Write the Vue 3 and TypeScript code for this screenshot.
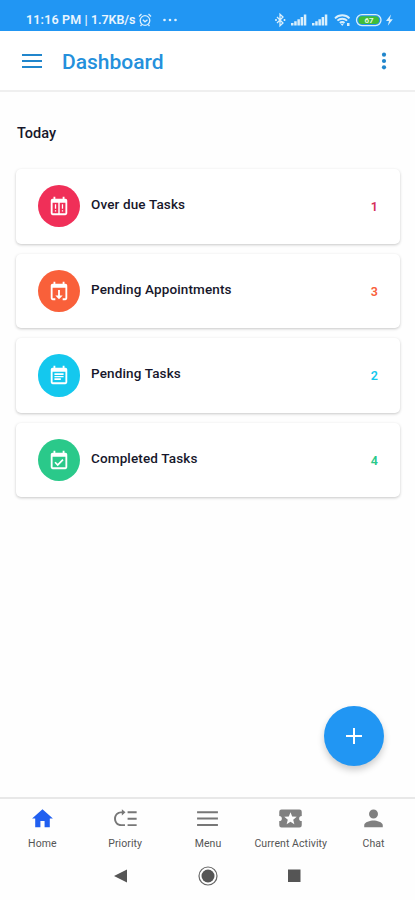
<script setup lang="ts">
interface TaskCard {
  label: string
  count: number
  tone: string
  glyph: string
}

interface Tab {
  label: string
  tone: string
  path: string
}

const frame =
  'M19 4h-1V2h-2v2H8V2H6v2H5a2 2 0 0 0-2 2v14a2 2 0 0 0 2 2h14a2 2 0 0 0 2-2V6a2 2 0 0 0-2-2zm0 16H5V8.500h14z'

const cards: TaskCard[] = [
  { label: 'Over due Tasks', count: 1, tone: 'red', glyph: frame + 'M11.200 8.500h1.600v11.500h-1.600zM7.500 10h1.400v5H7.500zm0 6.500h1.400V18H7.500zM15.100 10h1.400v5h-1.400zm0 6.500h1.400V18h-1.400z' },
  {
    label: 'Pending Appointments',
    count: 3,
    tone: 'orange',
    glyph:
      'M19 4h-1V2h-2v2H8V2H6v2H5a2 2 0 0 0-2 2v14a2 2 0 0 0 2 2h3v-2H5V8.500h14V20h-3v2h3a2 2 0 0 0 2-2V6a2 2 0 0 0-2-2zM11 11v6H8l4 4 4-4h-3v-6z',
  },
  { label: 'Pending Tasks', count: 2, tone: 'cyan', glyph: frame + 'M7 10h10v2H7zm0 3h10v1.500H7zm0 2.500h7v2H7z' },
  { label: 'Completed Tasks', count: 4, tone: 'green', glyph: frame + 'M10.600 18.700l6.400-6.400-1.300-1.300-5.100 5.100-2.300-2.300L7 15.100z' },
]

const tabs: Tab[] = [
  { label: 'Home', tone: 'active', path: 'M10 20.500v-6h4v6h5v-8.500h3L12 3 2 12h3v8.500z' },
  {
    label: 'Priority',
    tone: 'mid',
    path: 'M14 17.400h8.700v1.900H14zm0-6.200h8.700v1.900H14zM14 5h8.700v1.900H14zM1 12.200C1 8.300 4 5.200 7.800 5.200H8.500V3.200l3.500 2.900-3.500 2.900V7H7.800C4.900 7 2.900 9.200 2.900 12.200s2 5.200 4.900 5.200H11.500v1.900H7.800C4 19.300 1 16.100 1 12.200z',
  },
  { label: 'Menu', tone: 'mid', path: 'M2 5h20v1.900H2zm0 6.100h20V13H2zm0 6.100h20v1.900H2z' },
  {
    label: 'Current Activity',
    tone: 'soft',
    path: 'M22.800 9.500V5.500a2.200 2.200 0 0 0-2.200-2.200H3.400a2.200 2.200 0 0 0-2.200 2.200v4a2.500 2.500 0 0 1 0 5v4a2.200 2.200 0 0 0 2.200 2.200h17.200a2.200 2.200 0 0 0 2.200-2.200v-4a2.500 2.500 0 0 1 0-5zM15.700 17.400L12 15l-3.700 2.400 1.100-4.300L6 10.300l4.400-.3L12 5.900l1.600 4.100 4.400.3-3.400 2.800z',
  },
  {
    label: 'Chat',
    tone: 'soft',
    path: 'M12 12a4.300 4.300 0 1 0 0-8.600 4.300 4.300 0 0 0 0 8.600zm0 2c-3 0-8.900 1.500-8.900 4.500v2h17.800v-2c0-3-5.900-4.500-8.900-4.500z',
  },
]
</script>

<template>
  <div class="screen">
    <div class="status">
      <span class="clock">11:16 PM | <span class="speed">1.7KB/s</span></span>
      <svg class="alarm" viewBox="0 0 14 14">
        <circle cx="7" cy="7.500" r="4.800" />
        <path d="M1 3.500L3.500 1M13 3.500L10.500 1M4.800 6.700L7 8.800l2.500-2M3.700 11.500l-1.200 1.500M10.300 11.500l1.200 1.500" />
      </svg>
      <svg class="dots" viewBox="0 0 14 4">
        <circle cx="1.500" cy="2" r="1.300" /><circle cx="7" cy="2" r="1.300" /><circle cx="12.500" cy="2" r="1.300" />
      </svg>
      <svg class="signals" viewBox="0 0 124 16">
        <path class="line" d="M2 5l6 6-3 2.800V2.200L8 5l-6 6" />
        <path class="dot" d="M.2 7h1.600v2H.2zM8.700 7h1.600v2H8.700z" />
        <g v-for="x in [16, 37]" :key="x" class="bars">
          <path :d="`M${x} 11h2.500v2.500H${x}zM${x + 3.200} 9.200h2.500v4.300h-2.500zM${x + 6.400} 7.200h2.500v6.300h-2.500zM${x + 9.600} 5h2.500v8.500h-2.500zM${x + 12.800} 2.500h2.500v11h-2.500z`" />
        </g>
        <path class="wifi" d="M60 6.300c4-4 10.500-4 14.500 0M62.400 8.700c2.700-2.700 7-2.700 9.700 0M64.900 11c1.300-1.300 3.300-1.300 4.600 0" />
        <path class="dot" d="M65.600 11.800h3.300L67.200 14zM72 11h2.500v3H72z" />
        <rect class="shell" x="81.500" y="2.600" width="24.500" height="11" rx="5.500" />
        <rect class="charge" x="83.500" y="4.300" width="20.500" height="7.600" rx="3.500" />
        <text class="level" x="94" y="11" text-anchor="middle">67</text>
        <path class="dot" d="M116 2.500l-5 6.500h3l-1.200 4.800 5-6.500h-3z" />
      </svg>
    </div>

    <header class="bar">
      <svg class="burger" viewBox="0 0 20 14"><path d="M0 1h20M0 7h20M0 13h20" /></svg>
      <h1>Dashboard</h1>
      <svg class="more" viewBox="0 0 6 18">
        <circle cx="3" cy="2.700" r="2.100" /><circle cx="3" cy="9" r="2.100" /><circle cx="3" cy="15.300" r="2.100" />
      </svg>
    </header>

    <main>
      <h2>Today</h2>
      <ul class="cards">
        <li v-for="card in cards" :key="card.label" class="card" :class="card.tone">
          <span class="badge"><svg viewBox="0 0 24 24"><path :d="card.glyph" /></svg></span>
          <span class="label">{{ card.label }}</span>
          <span class="count">{{ card.count }}</span>
        </li>
      </ul>
      <button class="fab" aria-label="Add">
        <svg viewBox="0 0 18 18"><path d="M9 1v16M1 9h16" /></svg>
      </button>
    </main>

    <nav class="tabs">
      <div v-for="tab in tabs" :key="tab.label" class="tab" :class="tab.tone">
        <svg viewBox="0 0 24 24"><path :d="tab.path" /></svg>
        <span>{{ tab.label }}</span>
      </div>
    </nav>

    <footer class="system">
      <svg viewBox="0 0 20 20"><path d="M3 10L16 3.500v13z" /></svg>
      <svg viewBox="0 0 20 20"><circle class="ring" cx="10" cy="10" r="9" /><circle cx="10" cy="10" r="6.500" /></svg>
      <svg viewBox="0 0 20 20"><path d="M4 3.500h12.500v12.500H4z" /></svg>
    </footer>
  </div>
</template>

<style>
body {
  margin: 0;
  background: #fefefe;
}
</style>

<style scoped>
.screen {
  box-sizing: border-box;
  display: flex;
  flex-direction: column;
  width: 415px;
  height: 900px;
  overflow: hidden;
  background: #fefefe;
  color: #17172b;
  font-family: Roboto, 'Liberation Sans', sans-serif;
}
svg {
  display: block;
  flex: none;
}
.status {
  display: flex;
  align-items: center;
  flex: none;
  box-sizing: border-box;
  height: 31px;
  padding: 9px 20px 0 26px;
  background: #2196f3;
  color: #e9f5fe;
}
.clock {
  width: 111px;
  font-size: 12.500px;
  font-weight: 600;
  line-height: 16px;
  letter-spacing: 0.15px;
  white-space: nowrap;
}
.speed {
  letter-spacing: -0.1px;
}
.alarm {
  width: 14px;
  height: 14px;
  margin-left: 1px;
  fill: none;
  stroke: #d9eefd;
  stroke-width: 1.3;
}
.dots {
  width: 14px;
  height: 4px;
  margin-left: 11px;
  fill: #e3f3fe;
}
.signals {
  width: 124px;
  height: 16px;
  margin-left: auto;
  margin-right: -4px;
}
.line,
.wifi,
.shell {
  fill: none;
  stroke: #d9effc;
  stroke-width: 1.3;
}
.wifi {
  stroke-width: 1.9;
}
.bars,
.dot {
  fill: #d9effc;
}
.charge {
  fill: #3fbd38;
}
.level {
  fill: #e5fae0;
  font-size: 8px;
  font-weight: 700;
}
.bar {
  display: flex;
  align-items: center;
  flex: none;
  box-sizing: border-box;
  height: 61px;
  padding: 0 28px 0 22px;
  border-bottom: 2px solid #efefef;
  background: #fff;
}
.burger {
  width: 20px;
  height: 14px;
  stroke: #2186cc;
  stroke-width: 2;
}
.bar h1 {
  flex: 1;
  margin: 2px 0 0 20px;
  color: #2490dc;
  font-size: 21px;
  font-weight: 500;
  line-height: 28px;
}
.more {
  width: 6px;
  height: 18px;
  fill: #2186cc;
}
main {
  position: relative;
  flex: 1;
  padding: 32px 15px 0 16px;
}
h2 {
  margin: 0 0 0 1px;
  font-size: 14.5px;
  font-weight: 500;
  line-height: 20px;
}
.cards {
  display: flex;
  flex-direction: column;
  gap: 10px;
  margin: 25px 0 0;
  padding: 0;
  list-style: none;
}
.card {
  display: flex;
  align-items: center;
  box-sizing: border-box;
  height: 74.600px;
  padding: 0 22px 0 21.600px;
  border-radius: 5px;
  background: #fff;
  box-shadow: 0 1px 3px rgba(0, 0, 0, 0.22);
}
.badge {
  display: flex;
  align-items: center;
  justify-content: center;
  flex: none;
  width: 42.400px;
  height: 42.400px;
  border-radius: 50%;
  background: currentColor;
}
.badge svg {
  width: 22px;
  height: 22px;
  fill: #fff;
}
.label {
  flex: 1;
  margin: -4px 0 0 11px;
  color: #17172b;
  font-size: 13.500px;
  font-weight: 500;
  line-height: 18px;
  letter-spacing: 0.14px;
}
.count {
  font-size: 12.500px;
  font-weight: 600;
  line-height: 16px;
  margin-top: 2px;
}
.red { color: #f02f58; }
.red .count { color: #d52d5a; }
.orange { color: #f9603a; }
.cyan { color: #14c8ee; }
.green { color: #2ac98a; }
.fab {
  position: absolute;
  right: 31px;
  bottom: 31px;
  display: flex;
  align-items: center;
  justify-content: center;
  width: 60px;
  height: 60px;
  padding: 0;
  border: 0;
  border-radius: 50%;
  background: #2196f3;
  box-shadow: 0 4px 7px rgba(0, 0, 0, 0.2);
}
.fab svg {
  width: 18px;
  height: 18px;
  stroke: #fff;
  stroke-width: 2;
}
.tabs {
  display: grid;
  grid-template-columns: repeat(5, 1fr);
  flex: none;
  box-sizing: border-box;
  height: 54px;
  padding-left: 1px;
  border-top: 2px solid #e8e8e8;
}
.tab {
  display: flex;
  flex-direction: column;
  align-items: center;
  padding-top: 7px;
}
.tab svg {
  width: 25px;
  height: 25px;
}
.tab span {
  margin-top: 7px;
  color: #555;
  font-size: 10.500px;
  line-height: 12px;
  letter-spacing: 0.08px;
  white-space: nowrap;
}
.active svg { fill: #205ff0; }
.mid svg { fill: #777; }
.soft svg { fill: #808080; }
.system {
  display: flex;
  align-items: center;
  justify-content: space-between;
  flex: none;
  box-sizing: border-box;
  height: 49px;
  padding: 0 111px;
}
.system svg {
  width: 20px;
  height: 20px;
  fill: #555;
}
.system .ring {
  fill: none;
  stroke: #666;
  stroke-width: 1.2;
}
</style>
